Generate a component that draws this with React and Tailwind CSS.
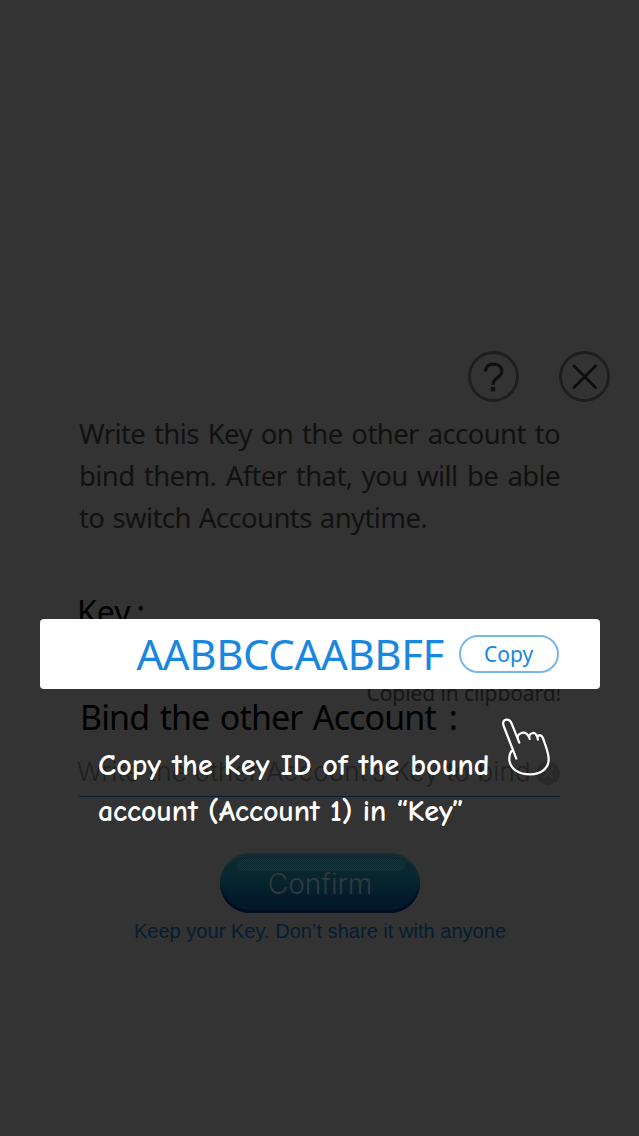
const sans = "font-['Noto_Sans','Noto_Sans_CJK_SC',sans-serif]";

function HelpIcon() {
  return (
    <svg className="size-[51px]" viewBox="0 0 51 51" fill="none">
      <circle cx="25.5" cy="25.5" r="24" stroke="#1e1e1e" strokeWidth="2.8" />
      <path d="M17.500 20.500C17.500 15.700 20.700 13.100 25.500 13.100c4.900 0 8.300 2.700 8.300 7.100 0 6.300-8.600 6.700-8.600 12.500v1" stroke="#101010" strokeWidth="3.300" />
      <path d="M22.800 35.900h4.400v4.400h-4.400z" fill="#101010" />
    </svg>
  );
}

function CloseIcon() {
  return (
    <svg className="size-[51px]" viewBox="0 0 51 51" fill="none">
      <circle cx="25.5" cy="25.5" r="24" stroke="#1e1e1e" strokeWidth="2.8" />
      <path d="M15 15l21.500 21.500M36.500 15L15 36.500" stroke="#0d0d0d" strokeWidth="2.8" strokeLinecap="round" />
    </svg>
  );
}

function Hand() {
  return (
    <svg className="absolute left-[500px] top-[716px] h-[60px] w-[50px]" viewBox="539 48 150 180" fill="none" stroke="white" strokeWidth="6.800" strokeLinecap="round" strokeLinejoin="round">
      <path d="M588 176L550 78C546 66 550 60 558 59C567 58 571 64 574 71L597 128C588 112 592 103 603 99C616 95 624 104 628 117C624 105 629 101 638 99C648 98 651 110 653 119C649 108 655 105 660 106C667 108 668 115 671 123C677 142 685 158 685 179C684 208 659 223 630 223C594 223 571 207 567 181C566 166 571 153 577 151" />
    </svg>
  );
}

export default function App() {
  return (
    <main className={`relative h-[1136px] w-[639px] overflow-hidden bg-[#333333] ${sans}`}>
      <div className="flex h-full flex-col pt-[351px]">
        <div className="flex h-[51px] shrink-0 justify-end gap-[40px] pr-[29px]">
          <HelpIcon />
          <CloseIcon />
        </div>
        <div className="mt-[11px] ml-[79px] w-[481px] text-[27.500px] leading-[42px] tracking-[-0.600px] text-[#111111]">
          <p className="whitespace-nowrap [text-align-last:justify]">Write this Key on the other account to</p>
          <p className="whitespace-nowrap [text-align-last:justify]">bind them. After that, you will be able</p>
          <p className="whitespace-nowrap [word-spacing:1.500px]">to switch Accounts anytime.</p>
        </div>
        <div className="mt-[49px] ml-[77px] h-[97px] text-[32px] leading-[48px] text-black">Key<span className="ml-[6px]">:</span></div>
        <div className="-mt-[5px] h-[26px] pr-[78px] text-right text-[21px] leading-[26px] tracking-[-0.100px] text-[#161616]">Copied in clipboard!</div>
        <h1 className="-mt-[10px] ml-[80px] whitespace-nowrap text-[34px] leading-[42px] tracking-[-0.900px] [word-spacing:2.500px] text-black">Bind the other Account<span className="ml-[13px]">:</span></h1>
        <div className="mt-[15px] mx-[79px] flex h-[44px] items-center justify-between border-b border-[#032038] pb-[4px] text-[#1f1f1f]">
          <span className="relative -top-px -ml-[2px] whitespace-nowrap font-['Inter','Liberation_Sans',sans-serif] text-[26px] font-light tracking-[0.220px]">Write the other Account’s Key to bind</span>
          <svg className="size-6 shrink-0" viewBox="0 0 24 24" fill="none">
            <circle cx="12" cy="12" r="11.700" fill="#292929" />
            <path d="M7 7l10 10M17 7L7 17" stroke="#343434" strokeWidth="1.500" />
          </svg>
        </div>
        <button className="relative mt-[56px] ml-[220px] flex h-[60px] w-[200px] shrink-0 items-center justify-center rounded-full bg-[linear-gradient(#102b33_0%,#08272f_30%,#05242e_50%,#04202c_64%,#031b2e_70%,#03182c_100%)] shadow-[inset_0_2px_2px_#1b3037,inset_0_-3px_1px_#020d20]">
          <span className="absolute left-[17px] top-[6px] h-[12px] w-[168px] rounded-full bg-[repeating-conic-gradient(#17343c_0_25%,#0b2931_0_50%)] bg-size-[2px_2px]" />
          <span className="relative top-px font-['Inter','Roboto',sans-serif] text-[28px] leading-none font-light text-[#34383a]">Confirm</span>
        </button>
        <p className="mt-[5px] pl-px whitespace-nowrap text-center font-['Liberation_Sans',sans-serif] text-[20px] leading-[26px] tracking-[0.030px] text-[#041d32]">Keep your Key. Don’t share it with anyone</p>
      </div>

      <section className="absolute left-[40px] top-[619px] flex h-[70px] w-[560px] items-center justify-end rounded-[4px] bg-white pr-[41px] text-[#1787df]">
        <span className="whitespace-nowrap pb-px text-[42px] leading-[69px] tracking-[-0.400px]">AABBCCAABBFF</span>
        <button className="ml-[15px] flex h-[38px] w-[100px] shrink-0 items-center justify-center rounded-full border-2 border-[#77b7eb] pr-px text-[21px] leading-none">Copy</button>
      </section>

      <p className="absolute left-[98px] top-[743px] whitespace-nowrap font-['Comic_Neue','Comic_Sans_MS','Lato',sans-serif] text-[30px] leading-[46px] font-bold text-white">
        <span className="block tracking-[0.150px]">Copy the Key ID of the bound</span>
        <span className="block tracking-[-0.150px]">account (Account 1) in “Key”</span>
      </p>
      <Hand />
    </main>
  );
}
